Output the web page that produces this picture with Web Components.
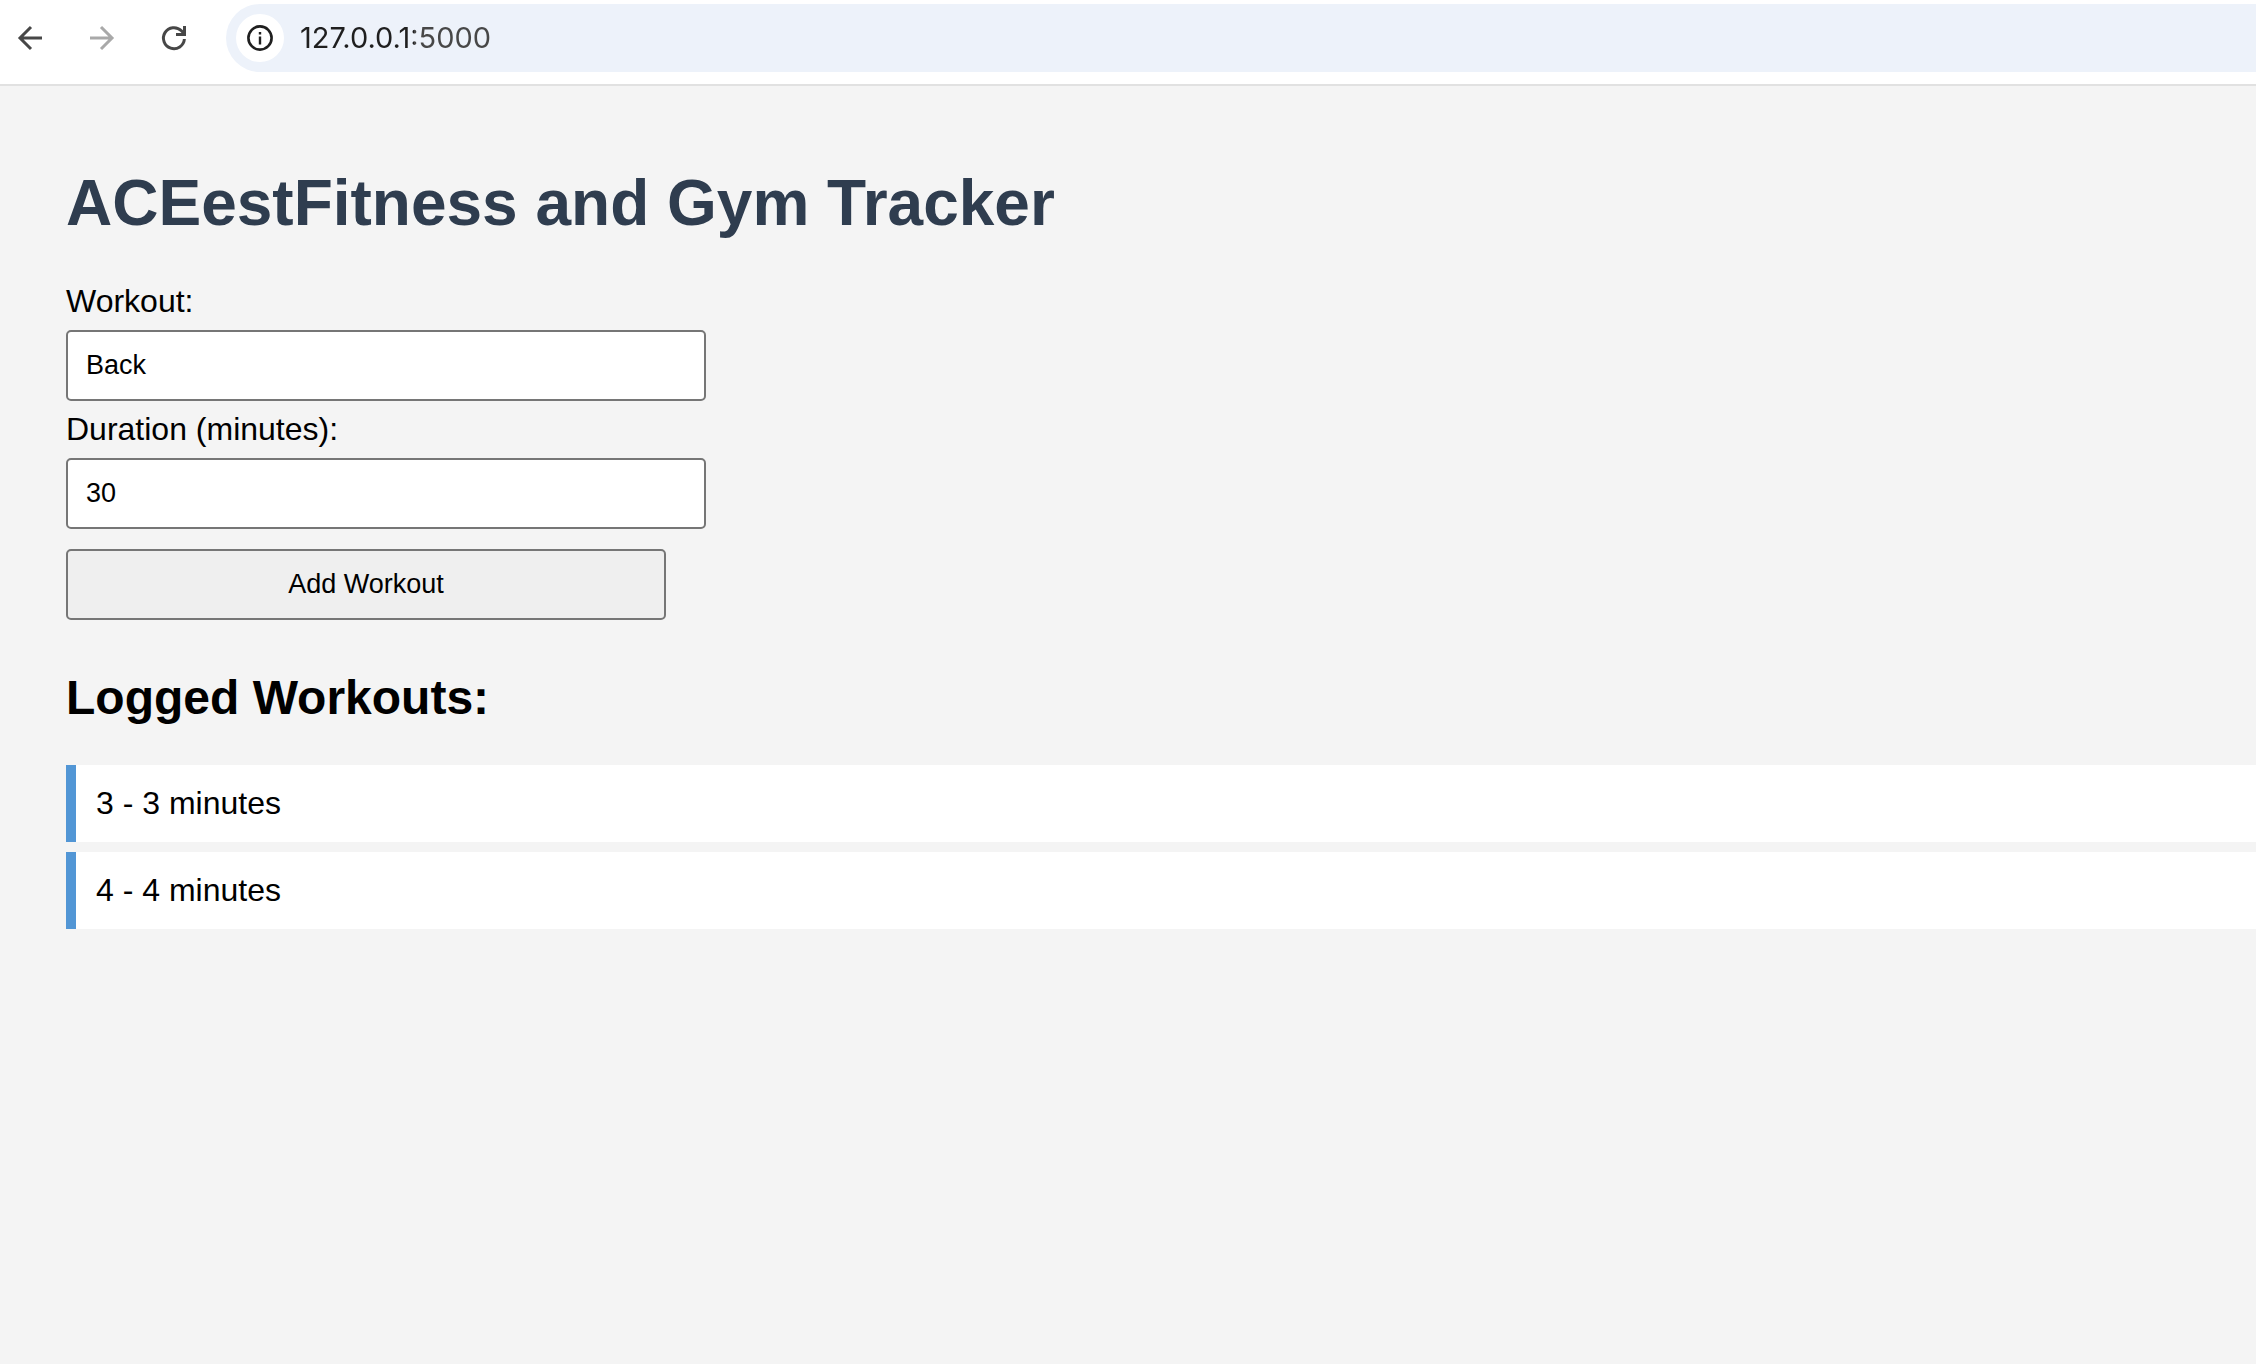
<!DOCTYPE html>
<html lang="en">
<head>
<meta charset="utf-8">
<title>ACEestFitness and Gym Tracker</title>
<style>
  body { margin: 0; min-height: 100vh; background: #f4f4f4; color: #000; font: 32px/37px "Liberation Sans", Arial, sans-serif; }
</style>
</head>
<body>
<browser-toolbar address="127.0.0.1:5000"></browser-toolbar>
<fitness-page heading="ACEestFitness and Gym Tracker">
  <workout-form></workout-form>
  <workout-log heading="Logged Workouts:">
    <workout-item>3 - 3 minutes</workout-item>
    <workout-item>4 - 4 minutes</workout-item>
  </workout-log>
</fitness-page>
<script>
class BaseElement extends HTMLElement {
  render(html) { this.attachShadow({ mode: "open" }).innerHTML = html; }
}

customElements.define("browser-toolbar", class extends BaseElement {
  connectedCallback() {
    this.render(`
      <style>
        :host { display: flex; align-items: center; box-sizing: border-box; height: 86px; padding: 4px 0 12px; background: #fff; border-bottom: 2px solid #e1e1e1; }
        nav { display: flex; gap: 24px; padding: 0 28px 0 6px; }
        button { display: flex; align-items: center; justify-content: center; width: 48px; height: 48px; padding: 0; border: 0; background: none; color: #474747; }
        button:disabled { color: #a9a9a9; }
        svg { display: block; fill: none; stroke: currentColor; stroke-width: 3; }
        .bar { flex: 1; display: flex; align-items: center; gap: 16px; height: 68px; padding-left: 10px; border-radius: 34px 0 0 34px; background: #edf2fa; }
        .bar button { border-radius: 50%; background: #fff; color: #1f1f1f; }
        input { flex: 1; min-width: 0; padding: 0; border: 0; outline: 0; font: 29px/36px Inter, sans-serif; color: #1f1f1f;
          background: linear-gradient(to right, #1f1f1f 114px, #474747 114px); -webkit-background-clip: text; background-clip: text; -webkit-text-fill-color: transparent; }
      </style>
      <nav>
        <button aria-label="Back"><svg width="28" height="28" viewBox="0 0 28 28"><path d="M26 14H4M15 3L4 14l11 11"/></svg></button>
        <button aria-label="Forward" disabled><svg width="28" height="28" viewBox="0 0 28 28"><path d="M2 14h22M13 3l11 11-11 11"/></svg></button>
        <button aria-label="Reload"><svg width="28" height="28" viewBox="0 0 28 28"><path d="M24.4 15A10.5 10.5 0 1 1 21.4 6.8L24 9.5M24.5 2v9M26 10.5H16"/></svg></button>
      </nav>
      <div class="bar">
        <button aria-label="Site information"><svg width="28" height="28" viewBox="0 0 28 28"><circle cx="14" cy="14" r="11.6" stroke-width="2.6"/><path d="M14 12.5v8M14 8v2.4" stroke-width="2.4"/></svg></button>
        <input type="text" aria-label="Address" value="${this.getAttribute("address")}">
      </div>`);
  }
});

customElements.define("fitness-page", class extends BaseElement {
  connectedCallback() {
    this.render(`
      <style>
        :host { display: block; padding: 80px 0 40px 66px; }
        h1 { margin: 0 0 43px; font-size: 64px; line-height: 74px; color: #2f3d4f; }
      </style>
      <h1>${this.getAttribute("heading")}</h1>
      <slot></slot>`);
  }
});

customElements.define("workout-form", class extends BaseElement {
  connectedCallback() {
    this.render(`
      <style>
        :host { display: block; }
        form { display: flex; flex-direction: column; align-items: flex-start; gap: 10px; }
        input, button { box-sizing: border-box; max-width: 100%; margin: 0; padding: 18px; border: 2px solid #767676; border-radius: 5px; font: 27px/31px "Liberation Sans", Arial, sans-serif; color: #000; }
        input { width: 640px; height: 71px; background: #fff; }
        button { width: 600px; margin-top: 10px; background: #efefef; }
      </style>
      <form>
        <label for="workout">Workout:</label>
        <input id="workout" type="text" value="Back">
        <label for="duration">Duration (minutes):</label>
        <input id="duration" type="number" value="30">
        <button type="button">Add Workout</button>
      </form>`);
  }
});

customElements.define("workout-log", class extends BaseElement {
  connectedCallback() {
    this.render(`
      <style>
        :host { display: block; margin-top: 50px; }
        h2 { margin: 0 0 40px; font-size: 48px; line-height: 55px; }
        div { display: flex; flex-direction: column; gap: 10px; }
      </style>
      <h2>${this.getAttribute("heading")}</h2>
      <div role="list"><slot></slot></div>`);
  }
});

customElements.define("workout-item", class extends BaseElement {
  connectedCallback() {
    this.setAttribute("role", "listitem");
    this.render(`
      <style>
        :host { display: block; padding: 20px; border-left: 10px solid #5296d5; background: #fff; }
      </style>
      <slot></slot>`);
  }
});
</script>
</body>
</html>
